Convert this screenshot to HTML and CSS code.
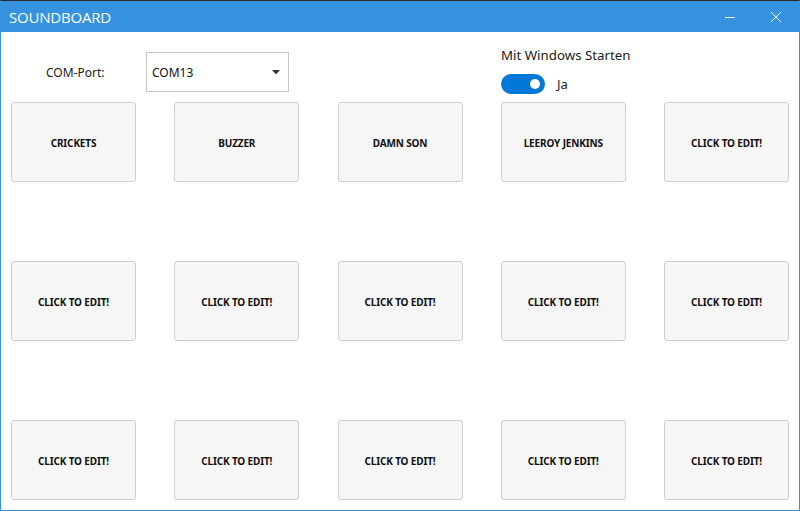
FILE: index.html
```html
<!DOCTYPE html>
<html>
<head>
<meta charset="utf-8">
<link rel="stylesheet" href="styles.css">
</head>
<body>
<div class="window">
  <div class="titlebar">
    <span class="title">SOUNDBOARD</span>
    <div class="controls">
      <span class="ctl"><svg width="12" height="12" viewBox="0 0 12 12"><line x1="1" y1="6.5" x2="11" y2="6.5" stroke="#fff" stroke-width="1"/></svg></span>
      <span class="ctl"><svg width="12" height="12" viewBox="0 0 12 12"><path d="M1 1 L11 11 M11 1 L1 11" stroke="#fff" stroke-width="1"/></svg></span>
    </div>
  </div>
  <div class="content">
    <div class="top">
      <div class="port">
        <span class="port-label">COM-Port:</span>
        <div class="combo">
          <span>COM13</span>
          <svg width="8" height="5" viewBox="0 0 8 5"><path d="M0 0 H8 L4 4.5 Z" fill="#333"/></svg>
        </div>
      </div>
      <div class="startup">
        <div class="startup-label">Mit Windows Starten</div>
        <div class="switch-row">
          <span class="switch"><span class="knob"></span></span>
          <span class="switch-text">Ja</span>
        </div>
      </div>
    </div>
    <div class="grid">
      <div class="row">
        <div class="pad">CRICKETS</div>
        <div class="pad">BUZZER</div>
        <div class="pad">DAMN SON</div>
        <div class="pad">LEEROY JENKINS</div>
        <div class="pad">CLICK TO EDIT!</div>
      </div>
      <div class="row">
        <div class="pad">CLICK TO EDIT!</div>
        <div class="pad">CLICK TO EDIT!</div>
        <div class="pad">CLICK TO EDIT!</div>
        <div class="pad">CLICK TO EDIT!</div>
        <div class="pad">CLICK TO EDIT!</div>
      </div>
      <div class="row">
        <div class="pad">CLICK TO EDIT!</div>
        <div class="pad">CLICK TO EDIT!</div>
        <div class="pad">CLICK TO EDIT!</div>
        <div class="pad">CLICK TO EDIT!</div>
        <div class="pad">CLICK TO EDIT!</div>
      </div>
    </div>
  </div>
</div>
</body>
</html>
```
FILE: styles.css
```css
html, body {
  margin: 0;
  padding: 0;
  width: 800px;
  height: 511px;
  overflow: hidden;
  background: #fff;
  font-family: "Noto Sans", "Open Sans", sans-serif;
}
.window {
  box-sizing: border-box;
  width: 800px;
  height: 511px;
  border-top: 1px solid #2b2b2b;
  border-left: 1px solid #3592de;
  border-right: 1px solid #3592de;
  border-bottom: 1px solid #3592de;
  display: flex;
  flex-direction: column;
}
.titlebar {
  height: 31px;
  background: #3592de;
  display: flex;
  align-items: center;
  justify-content: space-between;
  color: #fff;
}
.title {
  margin-left: 8px;
  font-family: "Open Sans", sans-serif;
  font-size: 15px;
  letter-spacing: -0.2px;
}
.controls {
  display: flex;
  height: 100%;
}
.ctl {
  width: 46px;
  display: flex;
  align-items: center;
  justify-content: center;
}
.content {
  flex: 1;
  display: flex;
  flex-direction: column;
}
.top {
  height: 70px;
  display: flex;
}
.port {
  display: flex;
  align-items: center;
  margin-left: 45px;
  margin-top: 20px;
  height: 40px;
}
.port-label {
  font-size: 12px;
  color: #222;
  width: 100px;
}
.combo {
  box-sizing: border-box;
  width: 143px;
  height: 40px;
  border: 1px solid #c8c8c8;
  display: flex;
  align-items: center;
  justify-content: space-between;
  padding: 0 8px 0 5px;
  font-size: 12px;
  color: #111;
}
.startup {
  margin-left: 212px;
  margin-top: 13px;
}
.startup-label {
  font-size: 13.3px;
  color: #222;
  line-height: 20px;
}
.switch-row {
  display: flex;
  align-items: center;
  margin-top: 9px;
}
.switch {
  width: 44px;
  height: 20px;
  border-radius: 10px;
  background: #0078d7;
  display: flex;
  align-items: center;
  justify-content: flex-end;
  box-sizing: border-box;
  padding-right: 5px;
}
.knob {
  width: 10px;
  height: 10px;
  border-radius: 50%;
  background: #fff;
}
.switch-text {
  margin-left: 12px;
  font-size: 13px;
  color: #222;
}
.grid {
  display: flex;
  flex-direction: column;
  gap: 79px;
  padding: 0 10px;
}
.row {
  display: flex;
  justify-content: space-between;
}
.pad {
  box-sizing: border-box;
  width: 125px;
  height: 80px;
  border: 1px solid #cfcfcf;
  border-radius: 3px;
  background: #f6f6f6;
  display: flex;
  align-items: center;
  justify-content: center;
  padding-top: 1px;
  font-size: 10px;
  letter-spacing: -0.15px;
  font-weight: 700;
  color: #111;
}
```
